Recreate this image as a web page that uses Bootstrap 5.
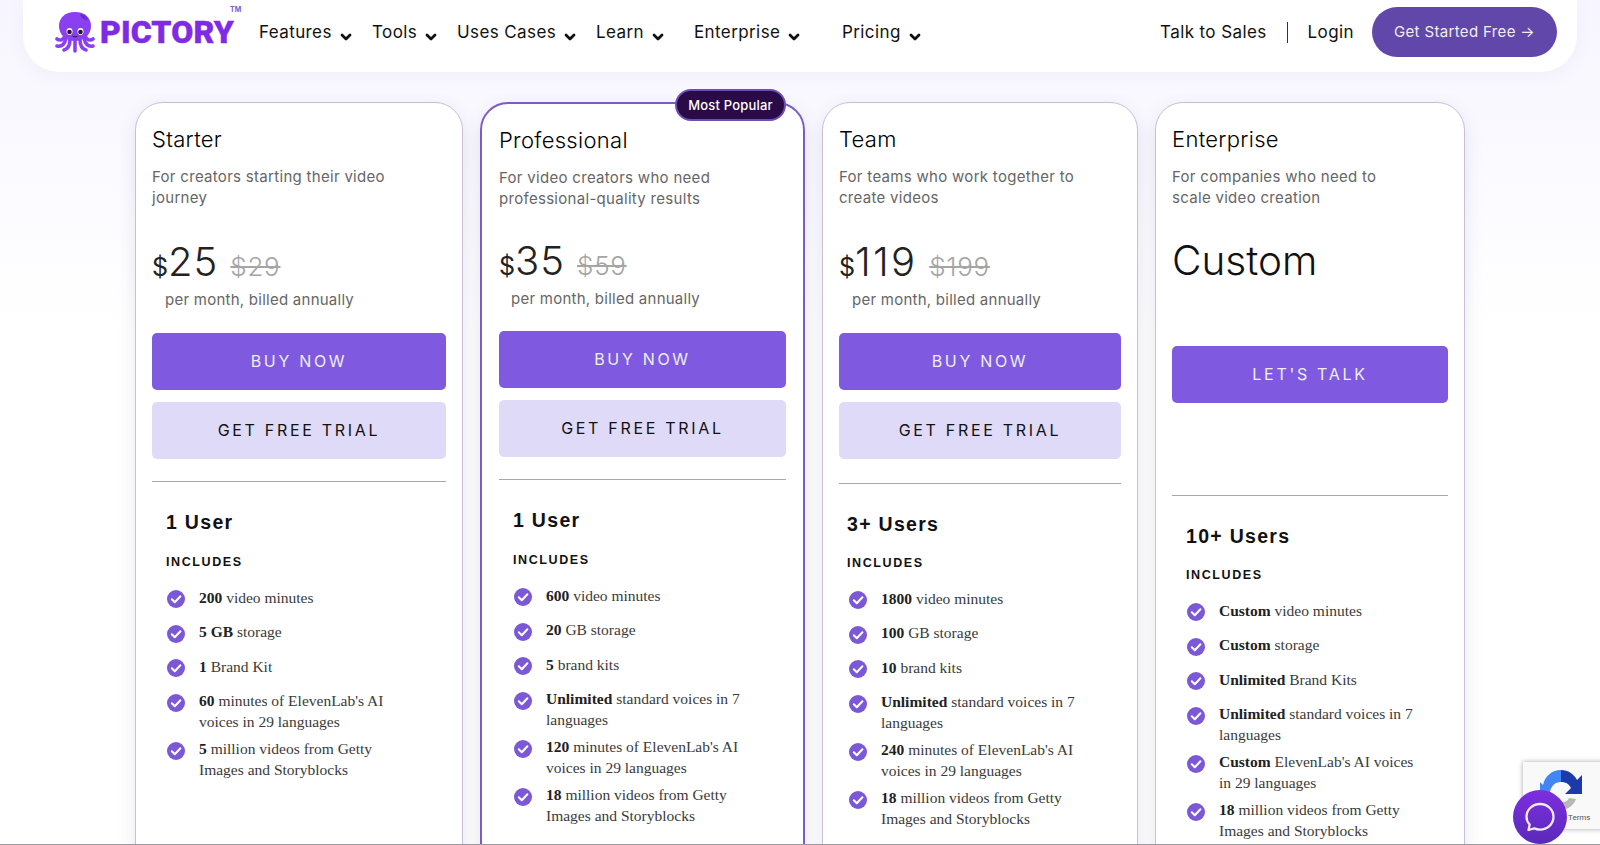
<!DOCTYPE html>
<html lang="en">
<head>
<meta charset="utf-8">
<title>Pictory Pricing</title>
<link href="https://cdn.jsdelivr.net/npm/bootstrap@5.3.0/dist/css/bootstrap.min.css" rel="stylesheet">
<style>
html,body{height:845px;overflow:hidden}
body{font-family:Inter,"Liberation Sans",sans-serif;background:linear-gradient(#f7f5ff 0,#fbfaff 170px,#fff 330px);color:#111;position:relative}
.page-line{position:absolute;left:0;right:0;bottom:0;height:1px;background:#9a9aa2;z-index:5}
.top-bar{height:72px;margin:0 23px;padding:0 20px 8px 32px;background:#fff;border-radius:0 0 36px 36px;box-shadow:0 4px 18px rgba(90,70,160,.05)}
.brand-box{width:204px;color:#7f2be6;text-decoration:none;gap:5px}
.brand-word{font-family:Roboto,"Liberation Sans",sans-serif;font-weight:900;font-size:32px;letter-spacing:.1px;line-height:1;-webkit-text-stroke:.4px #7f2be6}
.brand-tm{font-size:7px;font-weight:700;color:#7f5ad0;position:absolute;left:175px;top:-6px}
.menu-link{font-size:17px;color:#111;text-decoration:none;white-space:nowrap;padding:0;line-height:24px;letter-spacing:.4px}
.menu-link svg{margin-left:8px;vertical-align:-3px}
.m1{width:113px}.m2{width:85px}.m3{width:139px}.m4{width:98px}.m5{width:148px}
.right-links{margin-left:auto}
.divider-v{width:1px;height:21px;background:#333;margin:0 20px}
.start-btn{width:185px;height:50px;line-height:38px;margin-left:18px;border-radius:25px;background:#6247aa;color:#eee;border:0;font-size:15px;letter-spacing:.35px}
.start-btn:hover{background:#6247aa;color:#fff}
.plans{padding:30px 0 0 135px;gap:17px;align-items:flex-start}
.plan{height:780px;flex:none;background:#fff;border:1px solid #c8bfd4;border-radius:28px;box-shadow:0 6px 18px rgba(70,60,120,.13);padding:23px 16px 0;position:relative}
.plan-a{width:328px}
.plan-b{width:325px;border:2px solid #7a5cc4;padding:23px 17px 0 17px}
.plan-c{width:316px;padding-left:16px}
.plan-d{width:310px}
.plan-title{font-size:22px;font-weight:300;line-height:26px;margin:0;color:#000;letter-spacing:.3px}
.plan-desc{font-size:15px;line-height:21px;color:#666;margin:14px 0 0;letter-spacing:.3px}
.price-row{height:48px;margin-top:30px;line-height:48px;white-space:nowrap;color:#222}
.plan-b .price-row{margin-top:28px}
.cur{font-size:25px;font-weight:400}
.amt{font-size:40px;font-weight:300;margin-right:12px;letter-spacing:1px}
.plan-c .amt{letter-spacing:2.2px}
.was{font-size:26px;font-weight:300;color:#a5a5a5;text-decoration:line-through;letter-spacing:.7px}
.per{font-size:15px;line-height:21px;color:#666;margin:3px 0 0 13px;letter-spacing:.25px}
.plan-b .per{margin-left:12px}
.custom-price{height:48px;margin-top:29px;line-height:48px;font-size:40.5px;font-weight:300;color:#111}
.btn-main,.btn-soft{display:block;width:100%;height:57px;line-height:57px;padding:0;border-radius:5px;border:0;font-size:16px;letter-spacing:2.7px}
.btn-main{background:#7f5ae0;color:#eee;margin-top:23px}
.plan-b .btn-main{margin-top:22px}
.plan-d .btn-main{margin-top:61px}
.btn-main:hover{background:#7f5ae0;color:#eee}
.btn-soft{background:#e0daf9;color:#111;margin-top:11.5px}
.btn-soft:hover{background:#e0daf9;color:#111}
.plan-rule{margin:22.5px 0 0;border:0;border-top:1px solid #a9a7ae;opacity:1;height:0}
.plan-c .plan-rule{margin-top:24.5px}
.plan-d .plan-rule{margin-top:92px}
.feature-box{padding-left:14px}
.plan-c .feature-box{padding-left:8px}
.users{font-family:"Liberation Sans",sans-serif;font-weight:700;font-size:19.5px;letter-spacing:1.3px;line-height:24px;margin:28px 0 0;color:#111}
.incl{font-family:"Liberation Sans",sans-serif;font-weight:700;font-size:12.5px;letter-spacing:1.6px;line-height:16px;margin:20px 0 0;color:#111}
.plan-c .incl,.plan-d .incl{margin-top:19px}
.feat-list{margin:16.5px 0 0;padding:0;list-style:none}
.plan-c .feat-list{margin-left:1px}
.feat-list li{display:flex;gap:14px;min-height:34.5px;padding-bottom:6px;font-family:"Liberation Serif",serif;font-size:15.5px;line-height:21px;color:#3a3a3a}
.feat-list b{color:#222}
.feat-list svg{flex:none;margin:3.5px 0 0 1px}
.pop-tag{position:absolute;right:17px;top:-15px;width:111px;height:32px;line-height:28px;border:2px solid #6a4fb5;border-radius:16px;background:#2a0a47;color:#fff;font-size:13px;font-weight:500;text-align:center;padding:0;letter-spacing:.2px}
.recap{position:absolute;left:1523px;top:762px;width:90px;height:67px;background:#f9f9f9;box-shadow:0 0 5px rgba(0,0,0,.35);z-index:3}
.recap-icon{position:absolute;left:17px;top:6px}
.recap-terms{position:absolute;left:45px;top:50px;font-size:8px;color:#555;font-family:Roboto,"Liberation Sans",sans-serif}
.chat-bubble{position:absolute;left:1513px;top:790px;width:54px;height:54px;border-radius:50%;background:linear-gradient(#7d2ee0,#5a2ab8);z-index:4}
</style>
</head>
<body>
<svg width="0" height="0" class="position-absolute">
<symbol id="tick" viewBox="0 0 18 18"><circle cx="9" cy="9" r="9" fill="#7a58d6"/><path d="M4.8 9.3l3 3 5.600-6" fill="none" stroke="#fff" stroke-width="2" stroke-linecap="round" stroke-linejoin="round"/></symbol>
<symbol id="chev" viewBox="0 0 12 8"><path d="M2 2L6 6l4-4" fill="none" stroke="#111" stroke-width="2.800" stroke-linecap="round" stroke-linejoin="round"/></symbol>
</svg>

<nav class="navbar top-bar d-flex flex-nowrap align-items-center">
  <a class="brand-box d-flex align-items-center position-relative" href="#">
    <svg width="40" height="42" viewBox="0 0 40 42">
      <g fill="none" stroke="#8a3ff0" stroke-width="3.600" stroke-linecap="round" stroke-linejoin="round">
        <path d="M10 24C9 29 5 30 2 28"/><path d="M11 27C10 33 7 36 2 35"/><path d="M15 28C15 34 13 38 9 39"/><path d="M20 28V40"/><path d="M25 28C25 34 27 38 31 39"/><path d="M29 27C30 33 33 36 38 35"/><path d="M30 24C31 29 35 30 38 28"/>
      </g>
      <path d="M20 1C30 1 36 7 36 15C36 23 30 30 20 30C10 30 4 23 4 15C4 7 10 1 20 1Z" fill="#8a3ff0"/>
      <path d="M25 3C29 3 32 6 33 9C30 9 26 7 25 3Z" fill="#6d28c9"/>
      <ellipse cx="14.500" cy="20.500" rx="3" ry="3.400" fill="#fff"/><ellipse cx="25.500" cy="20.500" rx="3" ry="3.400" fill="#fff"/>
      <circle cx="14.500" cy="21" r="2.300" fill="#241437"/><circle cx="25.500" cy="21" r="2.300" fill="#241437"/>
      <path d="M17.500 25q2.500 2 5 0" fill="none" stroke="#241437" stroke-width="1"/>
    </svg>
    <span class="brand-word">PICTORY</span><span class="brand-tm">TM</span>
  </a>
  <a class="menu-link m1" href="#">Features<svg width="12" height="8"><use href="#chev"/></svg></a>
  <a class="menu-link m2" href="#">Tools<svg width="12" height="8"><use href="#chev"/></svg></a>
  <a class="menu-link m3" href="#">Uses Cases<svg width="12" height="8"><use href="#chev"/></svg></a>
  <a class="menu-link m4" href="#">Learn<svg width="12" height="8"><use href="#chev"/></svg></a>
  <a class="menu-link m5" href="#">Enterprise<svg width="12" height="8"><use href="#chev"/></svg></a>
  <a class="menu-link" href="#">Pricing<svg width="12" height="8"><use href="#chev"/></svg></a>
  <div class="right-links d-flex align-items-center">
    <a class="menu-link" href="#">Talk to Sales</a>
    <span class="divider-v"></span>
    <a class="menu-link" href="#">Login</a>
    <a class="btn start-btn" href="#">Get Started Free →</a>
  </div>
</nav>

<main class="plans d-flex">
  <section class="card plan plan-a">
    <h2 class="plan-title">Starter</h2>
    <p class="plan-desc">For creators starting their video<br>journey</p>
    <div class="price-row"><span class="cur">$</span><span class="amt">25</span><span class="was">$29</span></div>
    <p class="per">per month, billed annually</p>
    <a class="btn btn-main" href="#">BUY NOW</a>
    <a class="btn btn-soft" href="#">GET FREE TRIAL</a>
    <hr class="plan-rule">
    <div class="feature-box">
      <h3 class="users">1 User</h3>
      <h4 class="incl">INCLUDES</h4>
      <ul class="feat-list">
        <li><svg width="18" height="18"><use href="#tick"/></svg><span><b>200</b> video minutes</span></li>
        <li><svg width="18" height="18"><use href="#tick"/></svg><span><b>5 GB</b> storage</span></li>
        <li><svg width="18" height="18"><use href="#tick"/></svg><span><b>1</b> Brand Kit</span></li>
        <li><svg width="18" height="18"><use href="#tick"/></svg><span><b>60</b> minutes of ElevenLab's AI<br>voices in 29 languages</span></li>
        <li><svg width="18" height="18"><use href="#tick"/></svg><span><b>5</b> million videos from Getty<br>Images and Storyblocks</span></li>
      </ul>
    </div>
  </section>

  <section class="card plan plan-b">
    <span class="pop-tag">Most Popular</span>
    <h2 class="plan-title">Professional</h2>
    <p class="plan-desc">For video creators who need<br>professional-quality results</p>
    <div class="price-row"><span class="cur">$</span><span class="amt">35</span><span class="was">$59</span></div>
    <p class="per">per month, billed annually</p>
    <a class="btn btn-main" href="#">BUY NOW</a>
    <a class="btn btn-soft" href="#">GET FREE TRIAL</a>
    <hr class="plan-rule">
    <div class="feature-box">
      <h3 class="users">1 User</h3>
      <h4 class="incl">INCLUDES</h4>
      <ul class="feat-list">
        <li><svg width="18" height="18"><use href="#tick"/></svg><span><b>600</b> video minutes</span></li>
        <li><svg width="18" height="18"><use href="#tick"/></svg><span><b>20</b> GB storage</span></li>
        <li><svg width="18" height="18"><use href="#tick"/></svg><span><b>5</b> brand kits</span></li>
        <li><svg width="18" height="18"><use href="#tick"/></svg><span><b>Unlimited</b> standard voices in 7<br>languages</span></li>
        <li><svg width="18" height="18"><use href="#tick"/></svg><span><b>120</b> minutes of ElevenLab's AI<br>voices in 29 languages</span></li>
        <li><svg width="18" height="18"><use href="#tick"/></svg><span><b>18</b> million videos from Getty<br>Images and Storyblocks</span></li>
      </ul>
    </div>
  </section>

  <section class="card plan plan-c">
    <h2 class="plan-title">Team</h2>
    <p class="plan-desc">For teams who work together to<br>create videos</p>
    <div class="price-row"><span class="cur">$</span><span class="amt">119</span><span class="was">$199</span></div>
    <p class="per">per month, billed annually</p>
    <a class="btn btn-main" href="#">BUY NOW</a>
    <a class="btn btn-soft" href="#">GET FREE TRIAL</a>
    <hr class="plan-rule">
    <div class="feature-box">
      <h3 class="users">3+ Users</h3>
      <h4 class="incl">INCLUDES</h4>
      <ul class="feat-list">
        <li><svg width="18" height="18"><use href="#tick"/></svg><span><b>1800</b> video minutes</span></li>
        <li><svg width="18" height="18"><use href="#tick"/></svg><span><b>100</b> GB storage</span></li>
        <li><svg width="18" height="18"><use href="#tick"/></svg><span><b>10</b> brand kits</span></li>
        <li><svg width="18" height="18"><use href="#tick"/></svg><span><b>Unlimited</b> standard voices in 7<br>languages</span></li>
        <li><svg width="18" height="18"><use href="#tick"/></svg><span><b>240</b> minutes of ElevenLab's AI<br>voices in 29 languages</span></li>
        <li><svg width="18" height="18"><use href="#tick"/></svg><span><b>18</b> million videos from Getty<br>Images and Storyblocks</span></li>
      </ul>
    </div>
  </section>

  <section class="card plan plan-d">
    <h2 class="plan-title">Enterprise</h2>
    <p class="plan-desc">For companies who need to<br>scale video creation</p>
    <div class="custom-price">Custom</div>
    <a class="btn btn-main" href="#">LET'S TALK</a>
    <hr class="plan-rule">
    <div class="feature-box">
      <h3 class="users">10+ Users</h3>
      <h4 class="incl">INCLUDES</h4>
      <ul class="feat-list">
        <li><svg width="18" height="18"><use href="#tick"/></svg><span><b>Custom</b> video minutes</span></li>
        <li><svg width="18" height="18"><use href="#tick"/></svg><span><b>Custom</b> storage</span></li>
        <li><svg width="18" height="18"><use href="#tick"/></svg><span><b>Unlimited</b> Brand Kits</span></li>
        <li><svg width="18" height="18"><use href="#tick"/></svg><span><b>Unlimited</b> standard voices in 7<br>languages</span></li>
        <li><svg width="18" height="18"><use href="#tick"/></svg><span><b>Custom</b> ElevenLab's AI voices<br>in 29 languages</span></li>
        <li><svg width="18" height="18"><use href="#tick"/></svg><span><b>18</b> million videos from Getty<br>Images and Storyblocks</span></li>
      </ul>
    </div>
  </section>
</main>

<aside class="recap">
  <svg class="recap-icon" width="46" height="46" viewBox="0 0 46 46">
    <path d="M21 2C12 2 5 8 3 17l-3-3v15h15l-5-5c1-6 5-10 11-10z" fill="#4285f4"/>
    <path d="M21 2c7 0 13 4 16 10l5-5v19H25l6-6c-2-4-5-6-10-6z" fill="#1c3aa9"/>
    <path d="M36 31c-2 6-8 11-15 11-3 0-6-1-8-2l6-7c1 .500 2 1 3 1 3 0 6-1 7-4z" fill="#b8b8b8"/>
  </svg>
  <span class="recap-terms">Terms</span>
</aside>
<div class="chat-bubble d-flex align-items-center justify-content-center">
  <svg width="32" height="32" viewBox="0 0 32 32"><path d="M16 3c7.500 0 13.500 5.700 13.500 12.800S23.500 28.600 16 28.600c-2 0-4-.4-5.700-1.200L4.500 29l1.200-5.400C3.600 21.500 2.500 18.800 2.500 15.800 2.500 8.700 8.500 3 16 3z" fill="none" stroke="#f2e8ff" stroke-width="2.300" stroke-linejoin="round"/></svg>
</div>
<div class="page-line"></div>
</body>
</html>
